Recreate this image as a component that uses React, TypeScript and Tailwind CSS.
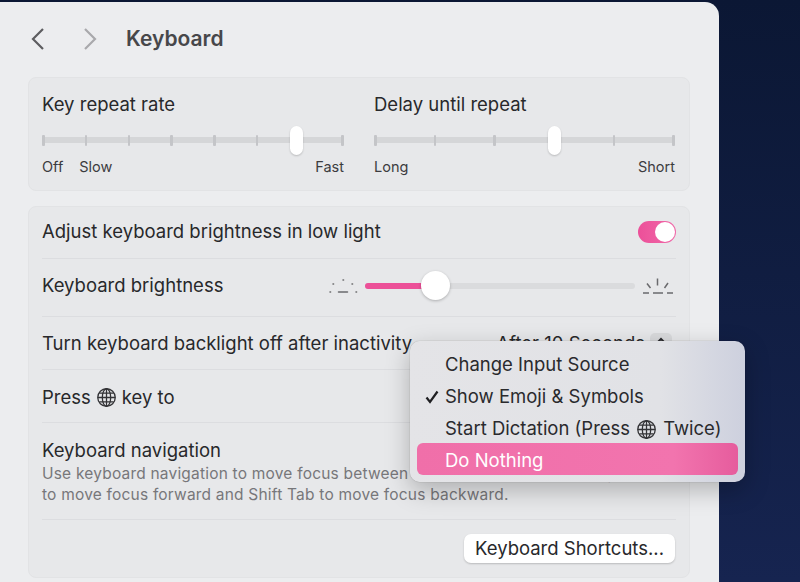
import React from "react";

function Globe({ size = 19, color = "#333336" }: { size?: number; color?: string }) {
  return (
    <svg width={size} height={size} viewBox="0 0 20 20" fill="none" stroke={color} strokeWidth="1.35" className="inline-block shrink-0">
      <circle cx="10" cy="10" r="9.2" />
      <ellipse cx="10" cy="10" rx="4.4" ry="9.2" />
      <path d="M10 .8v18.4M.8 10h18.4M2.4 5.4h15.2M2.4 14.6h15.2" />
    </svg>
  );
}

function Track({ ticks, thumb }: { ticks: number; thumb: string }) {
  return (
    <div className="relative h-[26px] mt-[10px]">
      <div className="absolute left-0 right-0 top-[11px] h-[6px] bg-[#d5d6d8]" />
      <div className="absolute left-0 right-0 top-[9px] h-[11px] flex justify-between">
        {Array.from({ length: ticks }).map((_, i) => (
          <div key={i} className="w-[2.5px] h-full bg-[#c4c5c8] rounded-[1px]" />
        ))}
      </div>
      <div className={`absolute top-0 h-[29px] w-[13px] rounded-full bg-white shadow-[0_1px_2px_rgba(0,0,0,0.2)] ${thumb}`} />
    </div>
  );
}

function Row({ children, h, last }: { children: React.ReactNode; h: string; last?: boolean }) {
  return (
    <div className={`flex items-center justify-between ${h} ${last ? "" : "border-b border-[#dcdde0]"}`}>
      {children}
    </div>
  );
}

function MenuItem({ children, check, active }: { children: React.ReactNode; check?: boolean; active?: boolean }) {
  return (
    <div
      className={`flex items-center h-[32px] pt-[4px] pl-[28px] rounded-[6px] relative text-[18.5px] ${
        active ? "bg-gradient-to-r from-[#f06fa9] via-[#f274ae] via-80% to-[#e65c9d] text-white" : "text-[#2a2a2d]"
      }`}
    >
      {check && (
        <svg width="14" height="14" viewBox="0 0 14 14" fill="none" stroke="#1f1f22" strokeWidth="2.2" className="absolute left-[8px] top-[11px]">
          <path d="M1.5 7.5 5 12 12.500 1.5" />
        </svg>
      )}
      {children}
    </div>
  );
}

export default function App() {
  return (
    <div
      className="relative w-[800px] h-[582px] overflow-hidden bg-gradient-to-b from-[#0b1734] to-[#162450]"
      style={{ fontFamily: "Inter, 'Liberation Sans', sans-serif" }}
    >
      <div className="w-[719px] h-[582px] mt-[2px] rounded-tr-[14px] bg-[#ecedef] pt-[20px] pl-[28px] pr-[29px] text-[#28282b]">
        <div className="flex items-center h-[34px]">
          <svg width="16" height="24" viewBox="0 0 16 24" fill="none" stroke="#5d5d60" strokeWidth="2.2" className="ml-[2px]">
            <path d="M13 2 3 12l10 10" />
          </svg>
          <svg width="16" height="24" viewBox="0 0 16 24" fill="none" stroke="#a9a9ac" strokeWidth="2.2" className="ml-[36px]">
            <path d="M3 2l10 10L3 22" />
          </svg>
          <span className="ml-[28px] text-[21px] font-semibold text-[#47474a]">Keyboard</span>
        </div>

        <div className="mt-[21px] h-[114px] rounded-[8px] bg-[#e7e8ea] border border-[#e2e3e5] px-[13px] pt-[14px] flex gap-[30px] text-[18.5px]">
          <div className="w-[302px]">
            <div className="leading-[24px]">Key repeat rate</div>
            <Track ticks={8} thumb="left-[248px]" />
            <div className="flex text-[14.5px] leading-[18px] mt-[6px] text-[#3c3c3f]">
              <span>Off</span>
              <span className="ml-[16px]">Slow</span>
              <span className="ml-auto">Fast</span>
            </div>
          </div>
          <div className="w-[301px]">
            <div className="leading-[24px]">Delay until repeat</div>
            <Track ticks={6} thumb="left-[174px]" />
            <div className="flex justify-between text-[14.5px] leading-[18px] mt-[6px] text-[#3c3c3f]">
              <span>Long</span>
              <span>Short</span>
            </div>
          </div>
        </div>

        <div className="mt-[15px] h-[372px] rounded-[8px] bg-[#e7e8ea] border border-[#e2e3e5] px-[13px] text-[18.5px]">
          <Row h="h-[52px] pb-[2px]">
            <span>Adjust keyboard brightness in low light</span>
            <div className="relative w-[38px] h-[22px] rounded-full bg-gradient-to-r from-[#ec4f99] to-[#f06aa9]">
              <div className="absolute right-[1px] top-[1px] w-[20px] h-[20px] rounded-full bg-white" />
            </div>
          </Row>
          <Row h="h-[58px] pb-[3px]">
            <span>Keyboard brightness</span>
            <div className="flex items-center pr-[3px]">
              <svg width="30" height="18" viewBox="0 0 30 18" fill="none" stroke="#6a6a6d" strokeWidth="1.5" strokeLinecap="round">
                <path d="M10.5 15h9M2 15h.6M28 15h.6M5 7h.6M24 7h.6M15 3h.6" />
              </svg>
              <div className="relative w-[270px] h-[6px] ml-[7px] mr-[8px] rounded-full bg-[#dadbdd]">
                <div className="absolute left-0 top-0 h-full w-[60px] rounded-l-full bg-[#ec5098]" />
                <div className="absolute left-[56px] top-[-12px] w-[29px] h-[29px] rounded-full bg-white shadow-[0_1px_3px_rgba(0,0,0,0.25)]" />
              </div>
              <svg width="30" height="20" viewBox="0 0 30 20" fill="none" stroke="#6a6a6d" strokeWidth="1.5">
                <path d="M0 17h6M10 17h10M24 17h6M14.5 2.5v7M4 7.5l3.5 4.5M25 7l-3.500 5" />
              </svg>
            </div>
          </Row>
          <Row h="h-[53px] pt-[1px]">
            <span>Turn keyboard backlight off after inactivity</span>
            <div className="flex items-center gap-[5px] mr-[4px]">
              <span>After 10 Seconds</span>
              <div className="w-[22px] h-[22px] rounded-[5px] bg-[#d9dadc] flex justify-center pt-[4px]">
                <svg width="12" height="8" viewBox="0 0 12 8" fill="none" stroke="#2a2a2d" strokeWidth="2">
                  <path d="M1.5 6.500 6 2l4.500 4.500" />
                </svg>
              </div>
            </div>
          </Row>
          <Row h="h-[53px] pt-[3px]">
            <span className="flex items-center gap-[6px]">
              Press <Globe /> key to
            </span>
          </Row>
          <div className="h-[97px] border-b border-[#dcdde0] pt-[15px]">
            <div className="leading-[24px]">Keyboard navigation</div>
            <div className="text-[15.5px] tracking-[0.2px] leading-[20.5px] text-[#77777a] whitespace-nowrap mt-[2px]">
              Use keyboard navigation to move focus between controls. Press the Tab key
              <br />
              to move focus forward and Shift Tab to move focus backward.
            </div>
          </div>
          <Row h="h-[58px] pb-[1px]" last>
            <span />
            <button className="h-[29px] w-[211px] mr-[1px] rounded-[7px] bg-white text-[18.5px] text-[#28282b] shadow-[0_1px_2px_rgba(0,0,0,0.2)]">
              Keyboard Shortcuts...
            </button>
          </Row>
        </div>
      </div>

      <div className="absolute left-[410px] top-[341px] w-[335px] h-[141px] rounded-[10px] bg-gradient-to-r from-[#e4e4e7] via-[#e1e2e6] via-75% to-[#cdd0de] px-[7px] pt-[6px] shadow-[0_8px_24px_rgba(0,0,0,0.25),0_0_1px_rgba(0,0,0,0.45)]">
        <MenuItem>Change Input Source</MenuItem>
        <MenuItem check>Show Emoji &amp; Symbols</MenuItem>
        <MenuItem>
          <span className="flex items-center gap-[7px]">
            Start Dictation (Press <Globe /> Twice)
          </span>
        </MenuItem>
        <MenuItem active>Do Nothing</MenuItem>
      </div>
    </div>
  );
}
